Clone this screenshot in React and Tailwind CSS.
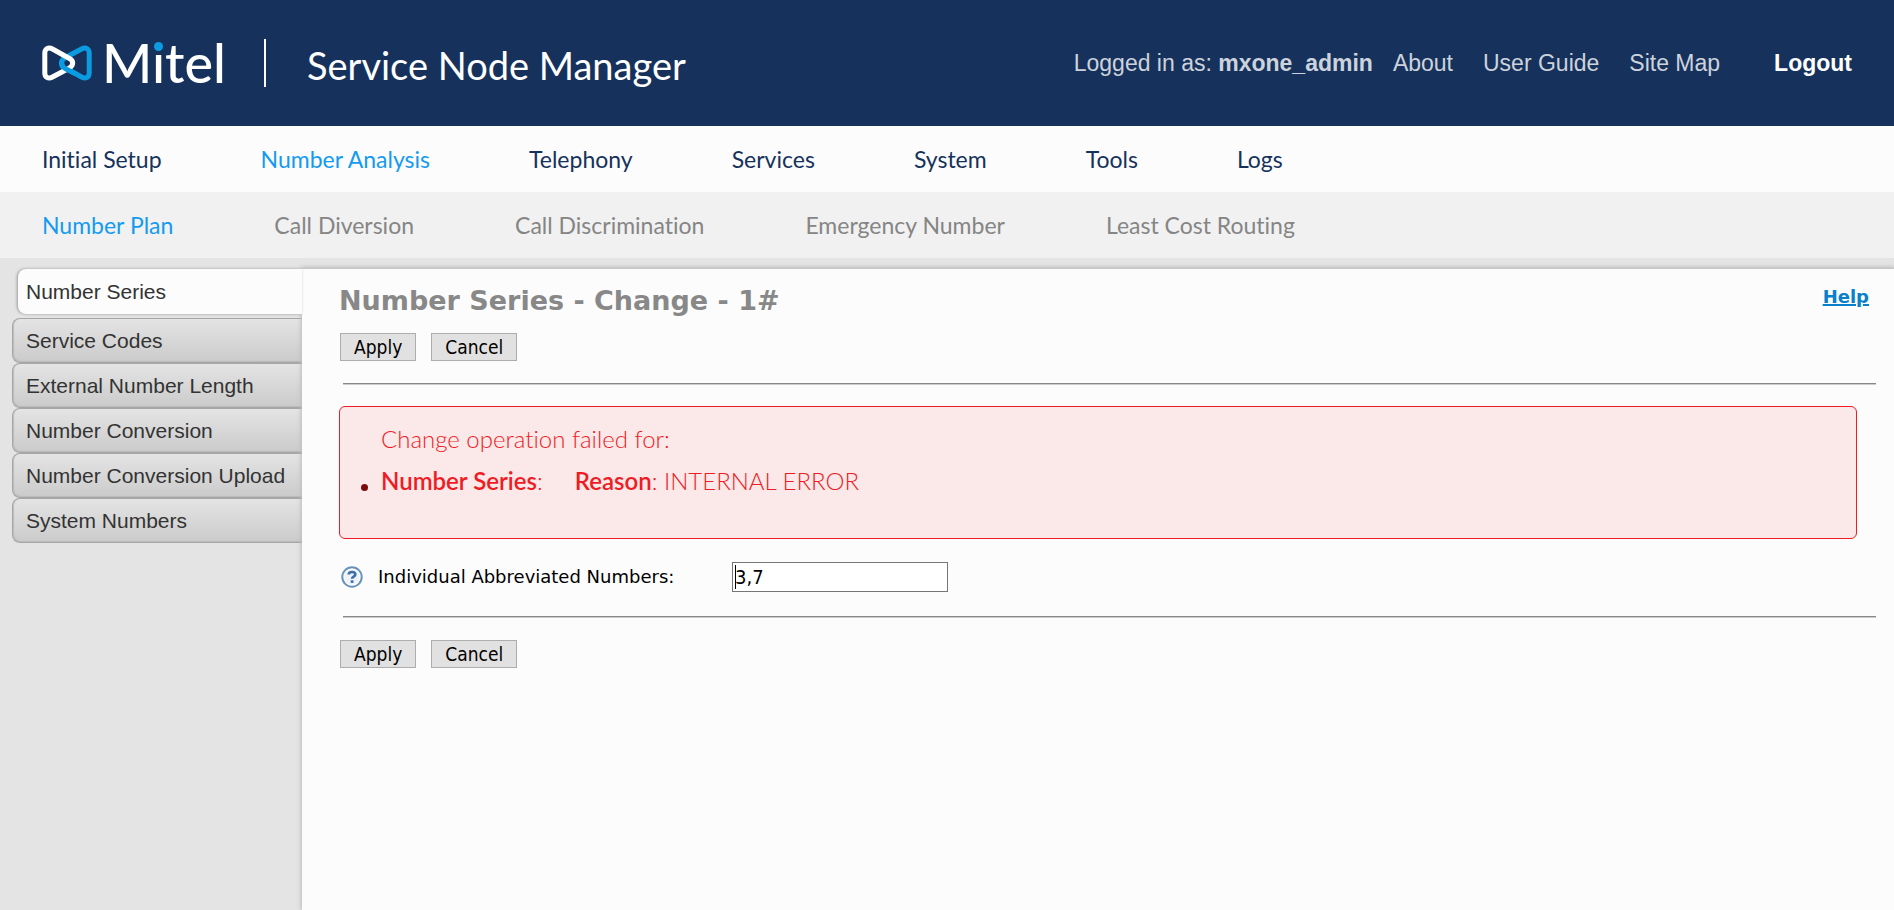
const mainNav = ["Initial Setup", "Number Analysis", "Telephony", "Services", "System", "Tools", "Logs"];
const subNav = ["Number Plan", "Call Diversion", "Call Discrimination", "Emergency Number", "Least Cost Routing"];
const sideNav = ["Service Codes", "External Number Length", "Number Conversion", "Number Conversion Upload", "System Numbers"];

function Logo() {
  return (
    <div className="flex items-center">
      <svg viewBox="0 0 50 36" className="h-9 w-[50px]" fill="none" strokeWidth="5" strokeLinejoin="round" strokeLinecap="round" aria-hidden="true">
        <path d="M28 25.500L39.500 32C44 34.500 47.200 32 47.200 28V8c0-4-3.200-6.500-7.700-4L23.500 12.500C18.500 15 18.500 20 21.500 22.500" stroke="#0a9be0" />
        <path d="M23 11L10.500 4C6 1.500 2.800 4 2.800 8v20c0 4 3.200 6.500 7.700 4L27.500 23C32 20 31.500 15.500 27.500 13.500z" stroke="#fff" />
        <path d="M20 16.500c-.8 3.500 1 6 4 7.500l9 4.500" stroke="#0a9be0" />
      </svg>
      <span className="relative ml-[10px] font-[Lato,sans-serif] text-[54px] leading-[54px] font-medium text-white">
        Mitel
        <span className="absolute top-[6px] left-[52px] size-[9px] rounded-full bg-[#0a9be0]" />
      </span>
    </div>
  );
}

function Actions() {
  const style = "h-7 border border-[#adadad] bg-[#e1e1e1] px-[13px] font-['DejaVu_Sans_Condensed','DejaVu_Sans',sans-serif] text-[19px] leading-6 text-black";
  return (
    <div className="flex gap-[15px] pl-px">
      <button type="button" className={style}>Apply</button>
      <button type="button" className={style}>Cancel</button>
    </div>
  );
}

function Rule() {
  return <hr className="mr-[18px] ml-1 h-[2px] border-0 border-t border-[#888] bg-[#ccc]" />;
}

function HelpIcon() {
  return (
    <svg viewBox="0 0 22 22" className="size-[22px]" aria-hidden="true">
      <circle cx="11" cy="11" r="9.700" fill="#fff" stroke="#6a93bb" strokeWidth="2" />
      <circle cx="11" cy="11" r="7.600" fill="#eef3f9" />
      <path d="M7.800 8.600C7.800 6.600 9.300 6 11 6s3.300.8 3.300 2.600c0 2.200-3.200 2-3.200 4.200" fill="none" stroke="#3b6fa5" strokeWidth="2.700" />
      <rect x="9.700" y="14.300" width="2.800" height="2.600" fill="#3b6fa5" />
    </svg>
  );
}

export default function App() {
  return (
    <div className="flex min-h-screen flex-col bg-[#e4e4e4] [font-variant-ligatures:none]">
      <header className="flex h-[126px] items-center bg-[#16325c] pr-[42px] pl-[42px]">
        <Logo />
        <div className="ml-[38px] h-12 w-[2px] bg-white" />
        <h1 className="ml-[41px] pt-1 font-[Lato,sans-serif] text-[38px] leading-[44px] text-white">Service Node Manager</h1>
        <div className="ml-auto flex items-center font-['Liberation_Sans',Arial,sans-serif] text-[23px] leading-7 text-[#cdd3dc]">
          <span>Logged in as: <b>mxone_admin</b></span>
          <a href="#about" className="ml-5">About</a>
          <a href="#guide" className="ml-[30px]">User Guide</a>
          <a href="#map" className="ml-[30px]">Site Map</a>
          <a href="#logout" className="ml-[54px] font-bold text-white">Logout</a>
        </div>
      </header>
      <nav className="flex h-[66px] items-center gap-[99px] bg-[#fcfcfc] px-[42px] font-[Lato,sans-serif] text-[23px] leading-7 text-[#16325c]">
        {mainNav.map((t) => (
          <a key={t} href="#main" className={t === "Number Analysis" ? "text-[#149bf0]" : ""}>{t}</a>
        ))}
      </nav>
      <nav className="flex h-[66px] items-center gap-[101px] bg-[#f1f1f1] px-[42px] font-[Lato,sans-serif] text-[23px] leading-7 text-[#858585]">
        {subNav.map((t) => (
          <a key={t} href="#sub" className={t === "Number Plan" ? "text-[#149bf0]" : ""}>{t}</a>
        ))}
      </nav>
      <div className="flex flex-1 pt-[11px]">
        <aside className="w-[302px] shrink-0 font-['Liberation_Sans',Arial,sans-serif] text-[21px] leading-6 text-[#333]">
          <a href="#series" className="relative z-30 ml-[18px] flex h-[45px] items-center rounded-l-lg bg-[#fcfcfc] pl-2 shadow-[-1px_0_3px_#999]">Number Series</a>
          <div className="mt-1 ml-3 flex flex-col">
            {sideNav.map((t) => (
              <a key={t} href="#side" className="flex h-[45px] items-center rounded-l-lg border-y border-l border-[#a6a6a6] bg-linear-to-b from-[#e4e4e4] to-[#cbcbcb] pl-[13px] shadow-[inset_1px_-1px_1px_#bbb]">{t}</a>
            ))}
          </div>
        </aside>
        <main className="relative z-20 min-w-0 flex-1 bg-[#fcfcfc] pl-[37px] shadow-[0_-1px_4px_1px_#bbb]">
          <div className="flex justify-between pt-4 pr-[25px] font-['DejaVu_Sans',Verdana,sans-serif] font-bold">
            <h2 className="text-[27px] leading-8 text-[#888]">Number Series - Change - 1#</h2>
            <a href="#help" className="text-[18px] leading-6 text-[#0880cc] underline decoration-2">Help</a>
          </div>
          <div className="pt-4 pb-[22px]"><Actions /></div>
          <Rule />
          <div className="mt-[21px] mr-[37px] h-[133px] rounded-md border border-[#ee1c25] bg-[#fbe8e8] pt-[15px] pl-[41px] font-[Lato,sans-serif] text-[24px] font-light text-[#ee1c25]">
            <p className="leading-[34px]">Change operation failed for:</p>
            <ul className="mt-2">
              <li className="relative flex gap-8 leading-[34px]">
                <span className="absolute top-5 -left-5 size-[7px] rounded-full bg-[#7d0a0a]" />
                <span><b className="font-semibold">Number Series</b>:</span>
                <span><b className="font-semibold">Reason</b>: INTERNAL ERROR</span>
              </li>
            </ul>
          </div>
          <div className="mt-[23px] mb-6 flex items-center pl-[2px]">
            <HelpIcon />
            <label htmlFor="numbers" className="ml-[15px] w-[354px] font-['DejaVu_Sans',Verdana,sans-serif] text-[18px] leading-6 text-black">Individual Abbreviated Numbers:</label>
            <div className="relative">
              <input id="numbers" type="text" defaultValue="3,7" className="h-[30px] w-[216px] border border-[#767676] bg-white px-[2px] font-['DejaVu_Sans_Condensed','DejaVu_Sans',sans-serif] text-[20px] text-black outline-none" />
              <span className="absolute top-[3px] left-[3px] h-6 w-px bg-black" />
            </div>
          </div>
          <Rule />
          <div className="pt-[22px]"><Actions /></div>
        </main>
      </div>
    </div>
  );
}
